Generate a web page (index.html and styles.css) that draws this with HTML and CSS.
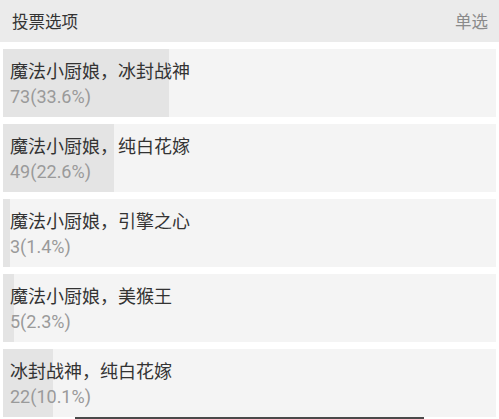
FILE: index.html
```html
<!DOCTYPE html>
<html lang="zh-CN">

<head>
    <meta charset="UTF-8">
    <meta name="viewport" content="width=device-width, initial-scale=1.0">
    <title>投票选项</title>
    <link rel="stylesheet" href="styles.css">
</head>

<body>
    <header class="vote-header">
        <span class="vote-title">投票选项</span>
        <span class="vote-mode">单选</span>
    </header>

    <ul class="options">
        <li class="option" style="--pct: 33.6%">
            <div class="option-name">魔法小厨娘，冰封战神</div>
            <div class="option-count">73(33.6%)</div>
        </li>
        <li class="option" style="--pct: 22.6%">
            <div class="option-name">魔法小厨娘，纯白花嫁</div>
            <div class="option-count">49(22.6%)</div>
        </li>
        <li class="option" style="--pct: 1.4%">
            <div class="option-name">魔法小厨娘，引擎之心</div>
            <div class="option-count">3(1.4%)</div>
        </li>
        <li class="option" style="--pct: 2.3%">
            <div class="option-name">魔法小厨娘，美猴王</div>
            <div class="option-count">5(2.3%)</div>
        </li>
        <li class="option" style="--pct: 10.1%">
            <div class="option-name">冰封战神，纯白花嫁</div>
            <div class="option-count">22(10.1%)</div>
        </li>
    </ul>

    <div class="scroll-line"></div>
</body>

</html>
```

FILE: styles.css
```css
body {
    margin: 0;
    background-color: #fff;
    font-family: Roboto, "Noto Sans CJK SC", sans-serif;
    position: relative;
    height: 419px;
    overflow: hidden;
}

.vote-header {
    height: 42px;
    background-color: #ebebeb;
    display: flex;
    justify-content: space-between;
    align-items: center;
    padding: 0 11px 0 12px;
}

.vote-title {
    font-size: 16.5px;
    color: #333;
}

.vote-mode {
    font-size: 16.5px;
    color: #8a8a8a;
}

.options {
    list-style: none;
    margin: 7px 3px 0 3px;
    padding: 0;
    display: flex;
    flex-direction: column;
    gap: 7px;
}

.option {
    height: 68px;
    box-sizing: border-box;
    padding: 10px 7px 0 7px;
    background: linear-gradient(to right, #e4e4e4 var(--pct), #f4f4f4 var(--pct));
}

.option-name {
    font-size: 18px;
    line-height: 25px;
    color: #333;
}

.option-count {
    font-size: 18px;
    line-height: 26px;
    color: #9a9a9a;
}

.scroll-line {
    position: absolute;
    left: 75px;
    width: 349px;
    bottom: 0;
    height: 2px;
    background-color: #4a4a4a;
}
```
